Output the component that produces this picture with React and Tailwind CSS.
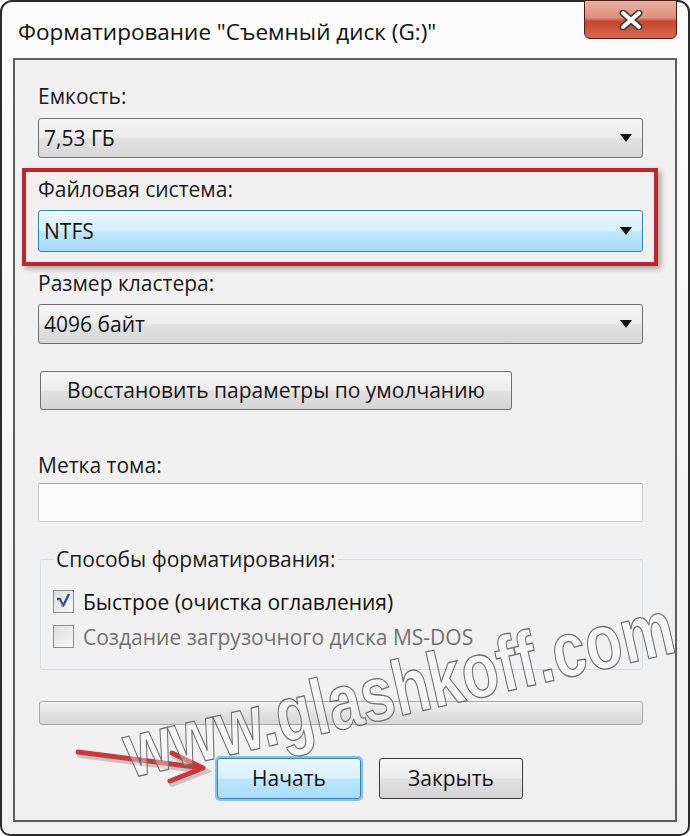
import React from "react";

function Arrow() {
  return (
    <svg width="12" height="8" viewBox="0 0 12 8">
      <path d="M0 0 H12 L6 8 Z" fill="#111" />
    </svg>
  );
}

function Combo({ text, blue, tall }) {
  const cls = blue
    ? "border-[#3c7fb1] bg-[linear-gradient(#eaf6fd_0%,#d9f0fc_48%,#bee6fd_52%,#a9dbf6_100%)]"
    : "border-[#6f6f6f] bg-[linear-gradient(#f4f4f4_0%,#ececec_48%,#e2e2e2_52%,#d6d6d6_100%)]";
  return (
    <div
      className={`flex items-center justify-between rounded-[3px] border pl-[5px] pr-[10px] ${cls} ${tall ? "h-[42px]" : "h-[40px]"}`}
    >
      <span className="text-[21px] leading-[24px] text-[#141414]">{text}</span>
      <Arrow />
    </div>
  );
}

function Label({ children, className = "" }) {
  return (
    <div className={`text-[21px] leading-[24px] text-[#1a1a1a] ${className}`}>{children}</div>
  );
}

function CheckBox({ checked }) {
  return (
    <div className="flex h-[23px] w-[21px] items-center justify-center border border-[#8e8f8f] bg-[linear-gradient(135deg,#dcdcdc,#f8f8f8)]">
      {checked && (
        <svg width="17" height="19" viewBox="0 0 17 19">
          <path
            d="M2 7 L5 7 L8 14 L14 2"
            fill="none"
            stroke="#3a4f86"
            strokeWidth="2.4"
            strokeLinejoin="round"
          />
          <path d="M4 8 L8 15" stroke="#9fb0d8" strokeWidth="1" />
        </svg>
      )}
    </div>
  );
}

export default function App() {
  return (
    <div className="relative h-[836px] w-[690px] overflow-hidden bg-white font-['Open_Sans','Noto_Sans',sans-serif]">
      <div className="relative flex h-[836px] w-[690px] flex-col rounded-t-[12px] rounded-b-[10px] border-2 border-[#2b2b2b] bg-[linear-gradient(#fbfbfb,#f1f1f1)]">
        {/* title */}
        <div className="flex h-[56px] items-center pl-[16px] pt-[4px] text-[22.5px] text-[#111]">
          Форматирование "Съемный диск (G:)"
        </div>
        {/* close button */}
        <div className="absolute right-[11px] top-[-2px] flex h-[39px] w-[93px] items-center justify-center rounded-b-[6px] border border-[#4a1f17] bg-[linear-gradient(#eab0a2_0%,#e0907c_45%,#c9442e_55%,#d86a52_100%)]">
          <svg width="26" height="20" viewBox="0 0 26 20">
            <path d="M5 3 L21 17 M21 3 L5 17" stroke="#3a3a3a" strokeWidth="7" strokeLinecap="round" />
            <path d="M5 3 L21 17 M21 3 L5 17" stroke="#ffffff" strokeWidth="4" strokeLinecap="round" />
          </svg>
        </div>

        {/* panel */}
        <div className="mx-[11px] flex h-[764px] flex-col border-2 border-[#5e5e5e] bg-[#f0f0f0] pl-[23px] pr-[32px] pt-[24px]">
          <Label>Емкость:</Label>
          <div className="mt-[10px]">
            <Combo text="7,53 ГБ" />
          </div>

          <div className="-ml-[16px] -mr-[15px] mt-[10px] border-4 border-[#c1252b] pb-[10px] pl-[12px] pr-[11px] pt-[5px] shadow-[3px_3px_5px_rgba(0,0,0,0.3)]">
            <Label>Файловая система:</Label>
            <div className="mt-[9px]">
              <Combo text="NTFS" blue tall />
            </div>
          </div>

          <Label className="mt-[5px]">Размер кластера:</Label>
          <div className="mt-[9px]">
            <Combo text="4096 байт" />
          </div>

          <div className="ml-[2px] mt-[27px] flex h-[39px] w-[472px] items-center justify-center rounded-[3px] border border-[#6f6f6f] bg-[linear-gradient(#f4f4f4_0%,#ececec_48%,#e0e0e0_52%,#d4d4d4_100%)] text-[21px] text-[#141414]">
            Восстановить параметры по умолчанию
          </div>

          <Label className="mt-[43px]">Метка тома:</Label>
          <div className="mt-[6px] h-[39px] rounded-[2px] border border-[#c9c9c9] border-t-[#a9a9a9] bg-[#fafafa]" />

          <div className="relative ml-[2px] mt-[37px] h-[111px] rounded-[3px] border border-[#d5dde2] pb-[21px] pl-[12px] pt-[30px]">
            <div className="absolute left-[13px] top-[-13px] bg-[#f0f0f0] px-[2px] text-[21px] leading-[24px] text-[#1a1a1a]">
              Способы форматирования:
            </div>
            <div className="flex h-[23px] items-center gap-[9px]">
              <CheckBox checked />
              <span className="text-[21px] leading-[24px] text-[#111]">Быстрое (очистка оглавления)</span>
            </div>
            <div className="mt-[12px] flex h-[23px] items-center gap-[9px]">
              <CheckBox />
              <span className="text-[21px] leading-[24px] text-[#707070]">Создание загрузочного диска MS-DOS</span>
            </div>
          </div>

          <div className="ml-[1px] mt-[31px] h-[24px] rounded-[3px] border border-[#a8a8a8] bg-[linear-gradient(#f2f2f2_0%,#e2e2e2_50%,#d6d6d6_100%)]" />

          <div className="mt-[33px] flex gap-[18px] pl-[179px]">
            <div className="flex h-[41px] w-[144px] items-center justify-center rounded-[3px] border border-[#3c7fb1] bg-[linear-gradient(#eaf6fd_0%,#d9f0fc_48%,#bee6fd_52%,#a9dbf6_100%)] text-[21px] text-[#141414] shadow-[0_0_0_2px_#7fc4ea]">
              Начать
            </div>
            <div className="flex h-[41px] w-[144px] items-center justify-center rounded-[3px] border border-[#3a3a3a] bg-[linear-gradient(#f4f4f4_0%,#ececec_48%,#e0e0e0_52%,#d4d4d4_100%)] text-[21px] text-[#141414]">
              Закрыть
            </div>
          </div>
        </div>
      </div>

      {/* red arrow */}
      <svg className="absolute left-0 top-0" width="690" height="836" viewBox="0 0 690 836">
        <g stroke="rgba(0,0,0,0.18)" strokeWidth="6" strokeLinecap="round" fill="none" transform="translate(2 3)">
          <path d="M78 752 L203 768 M172 753 L203 768 L170 781" />
        </g>
        <g stroke="#c9383a" strokeWidth="5" strokeLinecap="round" strokeLinejoin="round" fill="none">
          <path d="M78 752 L203 768 M172 753 L203 768 L170 781" />
        </g>
      </svg>

      {/* watermark */}
      <div className="absolute left-[132px] top-[712px] origin-[0_70px] whitespace-nowrap font-['Liberation_Sans',sans-serif] text-[78px] font-bold leading-[78px] text-[rgba(255,255,255,0.35)] [-webkit-text-stroke:1.3px_#6e6e6e] [transform:rotate(-13deg)_scaleX(0.77)]">
        www.glashkoff.com
      </div>
    </div>
  );
}
